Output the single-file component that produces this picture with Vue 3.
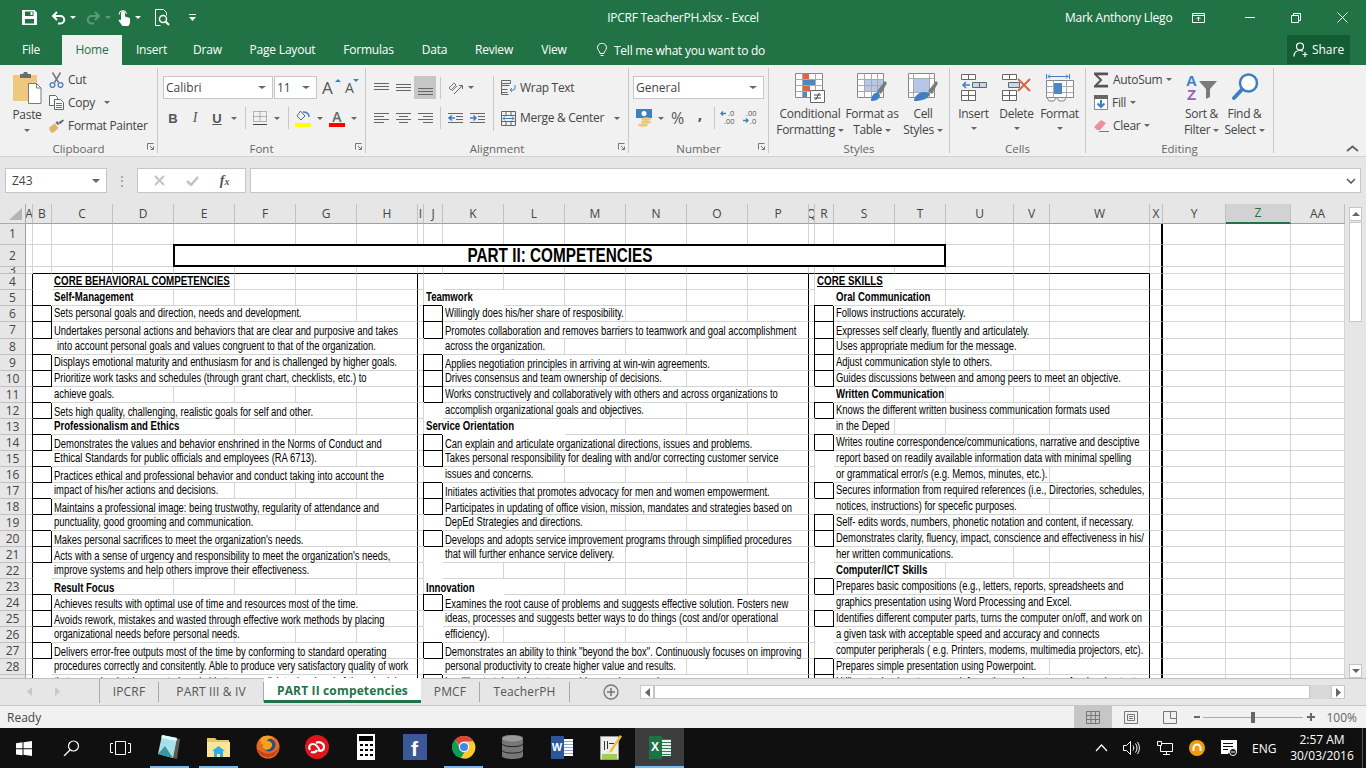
<template>
  <div class="app">
    <!-- title bar -->
    <div class="titlebar">
      <div class="qat">
        <svg class="q-save" width="15" height="15" viewBox="0 0 15 15"><path fill="#fff" fill-rule="evenodd" d="M0 0h12.5L15 2.5V15H0zM3 1.5V6h8.5V1.5zM3 9v4.5h9V9z"/><path fill="#fff" d="M8.5 2h2v3h-2z"/></svg>
        <svg class="q-undo" width="15" height="14" viewBox="0 0 15 14"><path fill="none" stroke="#fff" stroke-width="2" d="M6 1 2 5l4 4M2 5h7.5a3.7 3.7 0 0 1 0 7.5H7"/></svg>
        <i class="tri w q-car"></i>
        <svg class="q-redo" width="15" height="14" viewBox="0 0 15 14"><path fill="none" stroke="#5c9c7b" stroke-width="2" d="M9 1l4 4-4 4M13 5H5.500a3.700 3.700 0 0 0 0 7.500H8"/></svg>
        <i class="tri dim q-car"></i>
        <svg class="q-touch" width="13" height="16" viewBox="0 0 13 16"><path fill="#fff" d="M3 3a2 2 0 0 1 4 0v3.500l5 1.500v5l-1.500 3H4.500L.5 10.500l1-1L3 10z"/><path fill="none" stroke="#fff" d="M1.200 4.500a3.500 3.500 0 1 1 7.300-.5"/></svg>
        <i class="tri w q-car"></i>
        <svg class="q-prev" width="15" height="17" viewBox="0 0 15 17"><path fill="none" stroke="#fff" d="M5.500 16.500H.5V.5h8l3 3v3"/><circle cx="8" cy="10" r="3.500" fill="none" stroke="#fff" stroke-width="1.500"/><path stroke="#fff" stroke-width="2" d="M10.500 12.500l3.500 3.500"/></svg>
        <svg class="q-more" width="7" height="7" viewBox="0 0 7 7"><path fill="#fff" d="M0 0h7v1H0zM0 3h7L3.500 7z"/></svg>
      </div>
      <div class="doc-title">IPCRF TeacherPH.xlsx - Excel</div>
      <div class="win-area">
        <span class="user">Mark Anthony Llego</span>
        <svg class="w-disp" width="13" height="10" viewBox="0 0 13 10"><path fill="none" stroke="#fff" d="M.5.500h12v9H.5zM.5 2.500h12M6.500 8V4M4.500 6l2-2 2 2"/></svg>
        <svg class="w-min" width="10" height="1" viewBox="0 0 10 1"><path fill="#fff" d="M0 0h10v1H0z"/></svg>
        <svg class="w-max" width="10" height="10" viewBox="0 0 10 10"><path fill="none" stroke="#fff" d="M.5 2.500h7v7h-7zM2.500 2.500v-2h7v7h-2"/></svg>
        <svg class="w-close" width="11" height="11" viewBox="0 0 11 11"><path stroke="#fff" d="M.5.500l10 10M10.500.500l-10 10"/></svg>
      </div>
    </div>

    <!-- ribbon tabs -->
    <div class="tabs">
      <span class="tab rt-file">File</span>
      <span class="tab rt-home">Home</span>
      <span class="tab rt-insert">Insert</span>
      <span class="tab rt-draw">Draw</span>
      <span class="tab rt-layout">Page Layout</span>
      <span class="tab rt-form">Formulas</span>
      <span class="tab rt-data">Data</span>
      <span class="tab rt-review">Review</span>
      <span class="tab rt-view">View</span>
      <span class="tell">
        <svg width="10" height="14" viewBox="0 0 10 14"><path fill="none" stroke="#fff" d="M3 10.500C3 8 .5 7.500.5 4.700a4.500 4.500 0 0 1 9 0C9.500 7.500 7 8 7 10.500zM3.500 12.500h3"/></svg>
        Tell me what you want to do
      </span>
      <span class="share">
        <svg width="15" height="15" viewBox="0 0 15 15"><circle cx="7" cy="4.500" r="3.500" fill="none" stroke="#fff" stroke-width="1.200"/><path fill="none" stroke="#fff" stroke-width="1.200" d="M1 14.500c0-4 2.500-6 6-6 1.300 0 2.300.3 3 .8M12 10v5M9.500 12.500h5"/></svg>
        Share
      </span>
    </div>

    <!-- ribbon -->
    <div class="ribbon">
      <div class="group g-clip">
        <div class="g-body">
          <div class="paste">
            <svg width="29" height="33" viewBox="0 0 29 33"><path fill="#edc87e" d="M0 3h24v26H0z"/><path fill="#6b6b6b" d="M7 2h3l1-2h3l1 2h3v4H7z"/><path fill="#fff" stroke="#7b7b7b" d="M15.500 11.500h8l4.500 4.500v15.500H15.500z"/><path fill="none" stroke="#7b7b7b" d="M23.500 11.500V16H28"/></svg>
            <span class="lbl paste-l">Paste</span>
            <i class="tri"></i>
          </div>
          <div class="stack">
            <div class="row23">
              <svg class="sm" width="15" height="16" viewBox="0 0 15 16"><path stroke="#777" stroke-width="1.500" d="M3.500.5l6 10M11.500.5l-6 10"/><g fill="none" stroke="#3f7fc1" stroke-width="1.300"><circle cx="3.500" cy="13" r="2.400"/><circle cx="11.500" cy="13" r="2.400"/></g></svg>
              <span class="lbl">Cut</span>
            </div>
            <div class="row23">
              <svg class="sm" width="15" height="15" viewBox="0 0 15 15"><path fill="#fff" stroke="#666" d="M.5.500h6l2 2v8h-8z"/><path fill="#fff" stroke="#666" d="M5.500 4.500h6l3 3v7h-9z"/><path stroke="#3f7fc1" d="M7 8.500h6M7 10.500h6M7 12.500h6"/></svg>
              <span class="lbl">Copy</span>
              <i class="tri copy-car"></i>
            </div>
            <div class="row23">
              <svg class="sm" width="15" height="14" viewBox="0 0 16 14"><path fill="#e3b26a" d="M0 9l6-5 4 5-5 5H2z"/><path fill="#666" d="M7 3l2-1 2 3-2 1zM10 3l5-3 1 1-4 4z"/></svg>
              <span class="lbl">Format Painter</span>
            </div>
          </div>
        </div>
        <div class="g-label">Clipboard<svg class="launch" width="7" height="7" viewBox="0 0 7 7"><path fill="none" stroke="#777" d="M.5 6.500v-6h6M3 3l3.500 3.500M6.500 3.500v3h-3"/></svg></div>
      </div>

      <div class="group g-font">
        <div class="g-body col pad8">
          <div class="r1 ml5">
            <div class="input font-name"><span>Calibri</span><i class="tri"></i></div>
            <div class="input font-size"><span>11</span><i class="tri"></i></div>
            <span class="grow">A<i class="up"></i></span>
            <span class="shrink">A<i class="down"></i></span>
          </div>
          <div class="r2 ml4">
            <span class="s22 bi b">B</span>
            <span class="s22 bi i">I</span>
            <span class="s22 bi u">U</span>
            <i class="car"><i class="tri"></i></i>
            <i class="sep"></i>
            <span class="s22"><svg width="14" height="14" viewBox="0 0 14 14"><path fill="none" stroke="#777" stroke-dasharray="1 1" d="M.5.500h13v10H.5zM7 .5v10M.5 5.500h13"/><path stroke="#444" d="M0 13.500h14"/></svg></span>
            <i class="car"><i class="tri"></i></i>
            <i class="sep"></i>
            <span class="s22"><svg width="17" height="17" viewBox="0 0 17 17"><path fill="none" stroke="#666" d="M5.500 1l4.500 5-4 4-4-4z"/><path fill="none" stroke="#3f7fc1" stroke-width="1.500" d="M8 2c3 0 6 1.500 6 5"/><path fill="#ffff00" d="M0 13h16v4H0z"/></svg></span>
            <i class="car"><i class="tri"></i></i>
            <span class="s22"><svg width="16" height="17" viewBox="0 0 16 17"><text x="8" y="12" text-anchor="middle" font-family="Open Sans,sans-serif" font-size="14" font-weight="600" fill="#666">A</text><path fill="#ff0000" d="M0 13h16v4H0z"/></svg></span>
            <i class="car"><i class="tri"></i></i>
          </div>
        </div>
        <div class="g-label">Font<svg class="launch" width="7" height="7" viewBox="0 0 7 7"><path fill="none" stroke="#777" d="M.5 6.500v-6h6M3 3l3.500 3.500M6.500 3.500v3h-3"/></svg></div>
      </div>

      <div class="group g-align">
        <div class="g-body pad8 a-body">
          <div class="a-left">
            <div class="r1">
              <span class="s22"><svg width="15" height="10" viewBox="0 0 15 10"><path stroke="#666" d="M0 .5h15M0 3.500h15M0 6.500h15"/></svg></span>
              <span class="s22"><svg width="15" height="8" viewBox="0 0 15 8"><path stroke="#666" d="M0 .5h15M0 3.500h15M0 6.500h15"/></svg></span>
              <span class="s22 sel"><svg width="15" height="16" viewBox="0 0 15 16"><path stroke="#666" d="M0 8.500h15M0 11.500h15M0 14.500h15"/></svg></span>
              <i class="sep sep4"></i>
              <span class="s22"><svg width="15" height="14" viewBox="0 0 15 14"><path fill="none" stroke="#777" d="M1 7l5-5 2 2-5 5zM4 10l5-5"/><path fill="none" stroke="#666" d="M6 13l8-8M11 4.500h3.500V8"/></svg></span>
              <i class="car c10"><i class="tri"></i></i>
            </div>
            <div class="r2">
              <span class="s22"><svg width="15" height="11" viewBox="0 0 15 11"><path stroke="#666" d="M0 .5h15M0 3.500h10M0 6.500h15M0 9.500h10"/></svg></span>
              <span class="s22"><svg width="15" height="11" viewBox="0 0 15 11"><path stroke="#666" d="M0 .5h15M3 3.500h9M0 6.500h15M3 9.500h9"/></svg></span>
              <span class="s22"><svg width="15" height="11" viewBox="0 0 15 11"><path stroke="#666" d="M0 .5h15M5 3.500h10M0 6.500h15M5 9.500h10"/></svg></span>
              <i class="sep sep4"></i>
              <span class="s22"><svg width="15" height="11" viewBox="0 0 15 11"><path stroke="#666" d="M0 .5h15M8 3.500h7M8 6.500h7M0 9.500h15"/><path fill="none" stroke="#3f7fc1" stroke-width="1.500" d="M7 5H1M4 2.500L1 5l3 2.500"/></svg></span>
              <span class="s22"><svg width="15" height="11" viewBox="0 0 15 11"><path stroke="#666" d="M0 .5h15M8 3.500h7M8 6.500h7M0 9.500h15"/><path fill="none" stroke="#3f7fc1" stroke-width="1.500" d="M0 5h6M3.500 2.500L6 5 3.500 7.500"/></svg></span>
            </div>
          </div>
          <i class="vsep"></i>
          <div class="a-right">
            <div class="r1">
              <svg class="sm" width="15" height="15" viewBox="0 0 15 15"><path fill="none" stroke="#666" d="M.5.500h9v3h-9zM.5 5.500h8M.5 9.500h6M.5 12.500h6M.5 3.500v11h7"/><path fill="none" stroke="#3f7fc1" d="M14 5v3a2 2 0 0 1-2 2H9M11 8l-2 2 2 2"/></svg>
              <span class="lbl">Wrap Text</span>
            </div>
            <div class="r2">
              <svg class="sm" width="15" height="15" viewBox="0 0 15 15"><path fill="none" stroke="#666" d="M.5.500h14v14H.5zM.5 4.500h14M.5 10.500h14M5 .5v4M10 .5v4M5 10.500v4M10 10.500v4"/><path fill="none" stroke="#3f7fc1" d="M2 7.500h11M4 5.500l-2 2 2 2M11 5.500l2 2-2 2"/></svg>
              <span class="lbl flex1">Merge &amp; Center</span>
              <i class="tri"></i>
            </div>
          </div>
        </div>
        <div class="g-label">Alignment<svg class="launch" width="7" height="7" viewBox="0 0 7 7"><path fill="none" stroke="#777" d="M.5 6.500v-6h6M3 3l3.500 3.500M6.500 3.500v3h-3"/></svg></div>
      </div>

      <div class="group g-num">
        <div class="g-body col pad8">
          <div class="r1 ml5"><div class="input num-fmt"><span>General</span><i class="tri"></i></div></div>
          <div class="r2 ml4">
            <span class="s24"><svg width="17" height="18" viewBox="0 0 17 18"><path fill="#3f7fc1" d="M0 0h16v9H0z"/><circle cx="8" cy="4.500" r="2.500" fill="#fff"/><g fill="#edc87e"><ellipse cx="10" cy="10" rx="5" ry="1.700"/><ellipse cx="10" cy="13" rx="5" ry="1.700"/><ellipse cx="7" cy="16" rx="5" ry="1.700"/></g></svg></span>
            <i class="car c10"><i class="tri"></i></i>
            <span class="pct">%</span>
            <span class="comma">,</span>
            <i class="sep sep3"></i>
            <span class="s22"><svg class="dec" width="16" height="16" viewBox="0 0 16 16"><path fill="none" stroke="#3f7fc1" stroke-width="1.300" d="M5 3.500H0M2 1.500l-2 2 2 2"/><text x="7" y="6" font-family="Open Sans,sans-serif" font-size="7.500" fill="#555">.0</text><text x="3" y="14" font-family="Open Sans,sans-serif" font-size="7.500" fill="#555">.00</text></svg></span>
            <span class="s22"><svg class="dec" width="16" height="16" viewBox="0 0 16 16"><text x="3" y="6" font-family="Open Sans,sans-serif" font-size="7.500" fill="#555">.00</text><path fill="none" stroke="#3f7fc1" stroke-width="1.300" d="M0 10.500h5M3 8.500l2 2-2 2"/><text x="7" y="14" font-family="Open Sans,sans-serif" font-size="7.500" fill="#555">.0</text></svg></span>
          </div>
        </div>
        <div class="g-label">Number<svg class="launch" width="7" height="7" viewBox="0 0 7 7"><path fill="none" stroke="#777" d="M.5 6.500v-6h6M3 3l3.500 3.500M6.500 3.500v3h-3"/></svg></div>
      </div>

      <div class="group g-styles">
        <div class="g-body big-row">
          <div class="big w74">
            <div class="big-ic"><svg width="30" height="30" viewBox="0 0 30 30"><path fill="#fff" stroke="#888" d="M.5.500h27v24H.5z"/><path stroke="#aaa" d="M7.500.5v24M20.500.5v24M.5 6.500h27M.5 12.500h27M.5 18.500h27"/><path fill="#dd6541" d="M8 1h6v5H8zM8 13h7v5H8z"/><path fill="#4f86c6" d="M8 7h12v5H8zM8 19h4v5H8z"/><path fill="#fff" stroke="#666" d="M15.500 17.500h14v12h-14z"/><path stroke="#444" d="M19 22h7M19 25h7M24.500 20l-4 7"/></svg></div>
            <span class="lbl">Conditional</span>
            <span class="lbl">Formatting <i class="tri"></i></span>
          </div>
          <div class="big w50">
            <div class="big-ic"><svg width="30" height="30" viewBox="0 0 30 30"><path fill="#fff" stroke="#888" d="M.5.500h26v24H.5z"/><path fill="#b4c7e7" d="M7 7h19v12H7z"/><path stroke="#aaa" d="M7.500.5v24M14.500.5v24M20.500.5v24M.5 6.500h26M.5 12.500h26M.5 18.500h26"/><path fill="#7b7b7b" d="M20 18l8-10 2 2-6 11z"/><path fill="#3f7fc1" d="M14 28c0-5 3-9 8-9l1 4c-1 4-5 5-9 5z"/></svg></div>
            <span class="lbl">Format as</span>
            <span class="lbl">Table <i class="tri"></i></span>
          </div>
          <div class="big w52">
            <div class="big-ic"><svg width="30" height="30" viewBox="0 0 30 30"><path fill="#fff" stroke="#888" d="M.5.500h26v24H.5z"/><path fill="#b4c7e7" d="M5 5h17v14H5z"/><path stroke="#aaa" d="M.5 5.500h26M.5 19.500h26M5.500.5v24M21.500.5v24"/><path fill="#7b7b7b" d="M20 18l8-10 2 2-6 11z"/><path fill="#3f7fc1" d="M6 28c0-5 5-9 10-9l6 1c-1 6-8 8-16 8z"/></svg></div>
            <span class="lbl">Cell</span>
            <span class="lbl">Styles <i class="tri"></i></span>
          </div>
        </div>
        <div class="g-label">Styles</div>
      </div>

      <div class="group g-cells">
        <div class="g-body big-row pad2">
          <div class="big w43">
            <div class="big-ic"><svg width="26" height="28" viewBox="0 0 26 28"><path fill="#fff" stroke="#666" d="M.5 1.500h14v5h-14zM7.500 1.500v5M.5 17.500h14v10h-14zM.5 22.500h14M7.500 17.500v10"/><path fill="#c5d7ea" stroke="#666" d="M11.500 9.500h14v5h-14zM18.500 9.500v5"/><path fill="none" stroke="#3f7fc1" stroke-width="1.500" d="M9 12H2M5 9l-3 3 3 3"/></svg></div>
            <span class="lbl">Insert</span><i class="tri two"></i>
          </div>
          <div class="big w43">
            <div class="big-ic"><svg width="30" height="28" viewBox="0 0 30 28"><path fill="#fff" stroke="#666" d="M.5 1.500h14v5h-14zM7.500 1.500v5M.5 17.500h14v10h-14zM.5 22.500h14M7.500 17.500v10"/><path fill="#c5d7ea" stroke="#666" d="M6.500 9.500h11v5h-11z"/><path stroke="#dd6541" stroke-width="2" d="M16 6l12 12M28 6L16 18"/></svg></div>
            <span class="lbl">Delete</span><i class="tri two"></i>
          </div>
          <div class="big w43">
            <div class="big-ic"><svg width="28" height="30" viewBox="0 0 28 30"><path fill="none" stroke="#3f7fc1" d="M.5 1v5M23.500 1v5M2 3.500h20M4 1.500l-2 2 2 2M20 1.500l2 2-2 2"/><path fill="#fff" stroke="#888" d="M.5 7.500h27v17H.5z"/><path stroke="#aaa" d="M7.500 7.500v17M20.500 7.500v17M.5 13.500h27M.5 19.500h27"/><path fill="#4f86c6" d="M8 10h8v11H8z"/><path fill="none" stroke="#888" d="M1 25l2 3h5l2-3M11 25l2 3h5l2-3"/></svg></div>
            <span class="lbl">Format</span><i class="tri two"></i>
          </div>
        </div>
        <div class="g-label">Cells</div>
      </div>

      <div class="group g-edit">
        <div class="g-body e-body">
          <div class="stack e-stack">
            <div class="row23">
              <svg class="sm" width="15" height="16" viewBox="0 0 16 16"><path fill="#555" d="M0 0h15v3H4l5 5-5 5h11v3H0v-2l6-6-6-6z"/></svg>
              <span class="lbl flex1">AutoSum</span>
              <i class="tri auto-car"></i>
            </div>
            <div class="row23">
              <svg class="sm" width="14" height="15" viewBox="0 0 14 15"><path fill="#fff" stroke="#888" d="M.5.500h13v14H.5z"/><path fill="#666" d="M0 0h14v4H0z"/><path fill="none" stroke="#3f7fc1" stroke-width="2" d="M7 5v7M3.500 8.500L7 12l3.500-3.500"/></svg>
              <span class="lbl">Fill</span><i class="tri after"></i>
            </div>
            <div class="row23">
              <svg class="sm" width="15" height="13" viewBox="0 0 15 13"><path fill="#ef8f98" d="M0 8l7-7 5 3-6 7H3z"/><path stroke="#777" d="M5 12.500h10"/></svg>
              <span class="lbl">Clear</span><i class="tri after"></i>
            </div>
          </div>
          <div class="big w43">
            <div class="big-ic"><svg width="31" height="28" viewBox="0 0 31 28"><text x="0" y="13" font-family="Liberation Sans,sans-serif" font-weight="700" font-size="15" fill="#3f7fc1">A</text><text x="1" y="27" font-family="Liberation Sans,sans-serif" font-weight="700" font-size="15" fill="#9a5db5">Z</text><path fill="#7b7b7b" d="M13 8h18l-7 8v8l-4 2V16z"/></svg></div>
            <span class="lbl">Sort &amp;</span>
            <span class="lbl">Filter <i class="tri"></i></span>
          </div>
          <div class="big w43">
            <div class="big-ic"><svg width="28" height="28" viewBox="0 0 28 28"><circle cx="17.500" cy="10" r="8.500" fill="#fff" stroke="#3f7fc1" stroke-width="2.500"/><path stroke="#3f7fc1" stroke-width="4" stroke-linecap="round" d="M11 16.500L3 25"/></svg></div>
            <span class="lbl">Find &amp;</span>
            <span class="lbl">Select <i class="tri"></i></span>
          </div>
        </div>
        <div class="g-label">Editing</div>
      </div>

      <svg class="collapse" width="13" height="7" viewBox="0 0 13 7"><path fill="none" stroke="#666" stroke-width="2" d="M1 6l5.500-4.500L12 6"/></svg>
    </div>

    <!-- formula bar -->
    <div class="fbar">
      <div class="namebox"><span>Z43</span><i class="tri big-tri"></i></div>
      <span class="fdots">⋮</span>
      <div class="fbtns">
        <svg width="11" height="11" viewBox="0 0 11 11"><path stroke="#c4c4c4" stroke-width="2" d="M1 1l9 9M10 1l-9 9"/></svg>
        <svg width="13" height="10" viewBox="0 0 13 10"><path fill="none" stroke="#c4c4c4" stroke-width="2.500" d="M1 5l4 4 7-8"/></svg>
        <span class="fx">f<small>x</small></span>
      </div>
      <div class="finput">
        <svg width="10" height="6" viewBox="0 0 10 6"><path fill="none" stroke="#555" stroke-width="1.500" d="M1 1l4 4 4-4"/></svg>
      </div>
    </div>

    <!-- sheet -->
    <div class="sheet">
      <div class="grid" :style="gridStyle">
        <div class="corner">
          <svg width="13" height="12" viewBox="0 0 13 12"><path fill="#b4b4b4" d="M13 0v12H0z"/></svg>
        </div>
        <div v-for="c in colNames" :key="c" class="colhead" :class="{ active: c === 'Z' }">{{ c }}</div>
        <template v-for="cell in cells" :key="cell.key">
          <div v-if="cell.head" class="rowhead">{{ cell.text }}</div>
          <div v-else class="cell" :class="cell.cls" :style="cell.span > 1 ? { gridColumn: 'span ' + cell.span } : null"><span v-if="cell.text" class="tx">{{ cell.text }}</span></div>
        </template>
      </div>
      <div class="vscroll">
        <div class="sb-btn"><i class="tri up-tri"></i></div>
        <div class="sb-thumb"></div>
        <div class="sb-fill"></div>
        <div class="sb-btn"><i class="tri"></i></div>
      </div>
    </div>

    <!-- sheet tabs -->
    <div class="sheetbar">
      <div class="nav">
        <svg width="5" height="9" viewBox="0 0 5 9"><path fill="#c8c8c8" d="M5 0v9L0 4.500z"/></svg>
        <svg width="5" height="9" viewBox="0 0 5 9"><path fill="#c8c8c8" d="M0 0v9l5-4.500z"/></svg>
      </div>
      <span class="stab w59">IPCRF</span>
      <span class="stab w105">PART III &amp; IV</span>
      <span class="stab on">PART II competencies</span>
      <span class="stab w59">PMCF</span>
      <span class="stab w90">TeacherPH</span>
      <span class="plus">
        <svg width="16" height="16" viewBox="0 0 16 16"><circle cx="8" cy="8" r="7" fill="none" stroke="#777" stroke-width="1.300"/><path stroke="#777" stroke-width="1.600" d="M8 4v8M4 8h8"/></svg>
      </span>
      <div class="hscroll">
        <div class="hbtn"><svg width="5" height="9" viewBox="0 0 5 9"><path fill="#666" d="M5 0v9L0 4.500z"/></svg></div>
        <div class="hthumb"></div>
        <div class="hfill"></div>
        <div class="hbtn"><svg width="5" height="9" viewBox="0 0 5 9"><path fill="#666" d="M0 0v9l5-4.500z"/></svg></div>
      </div>
    </div>

    <!-- status bar -->
    <div class="status">
      <span class="ready">Ready</span>
      <div class="views">
        <span class="view sel2"><svg width="14" height="13" viewBox="0 0 14 13"><path fill="none" stroke="#777" d="M.5.500h13v12H.5zM5 .5v12M9.500.5v12M.5 4.500h13M.5 8.500h13"/></svg></span>
        <span class="view"><svg width="14" height="13" viewBox="0 0 14 13"><path fill="none" stroke="#777" d="M.5.500h13v12H.5z"/><path fill="none" stroke="#777" d="M3.500 3.500h7v6h-7zM5 5.500h4M5 7.500h4"/></svg></span>
        <span class="view"><svg width="14" height="13" viewBox="0 0 14 13"><path fill="none" stroke="#777" d="M.5.500h13v12H.5zM7.500.5v7h6"/></svg></span>
      </div>
      <div class="zoom-s">
        <i class="zm"></i>
        <div class="slider"><i class="knob"></i></div>
        <i class="zp"></i>
      </div>
      <span class="pct100">100%</span>
    </div>

    <!-- taskbar -->
    <div class="taskbar">
      <div class="sys">
        <svg class="tb-win" width="16" height="15" viewBox="0 0 16 15"><path fill="#fff" d="M0 2.200l6.500-.9v6H0zM7.500 1.200L16 0v7.300H7.500zM0 8.300h6.500v6L0 13.400zM7.500 8.300H16V15l-8.500-1.200z"/></svg>
        <svg class="tb-search" width="17" height="16" viewBox="0 0 17 16"><circle cx="10.500" cy="6" r="5" fill="none" stroke="#fff" stroke-width="1.200"/><path stroke="#fff" stroke-width="1.300" d="M7 10L1 16"/></svg>
        <svg class="tb-view" width="21" height="14" viewBox="0 0 21 14"><path fill="none" stroke="#fff" d="M5.500.5h10v13h-10zM3 2.500H.5v9H3M18 2.500h2.500v9H18"/></svg>
      </div>
      <div class="slots">
        <span class="slot run"><svg width="24" height="26" viewBox="0 0 24 26"><path fill="#5a5a4f" d="M5 2l17 3-3 20-4-1z"/><path fill="#a8dfe8" d="M4 1l15 3-4 20L0 20z"/><path fill="#3f94a4" d="M0 20l7-8 8 12z"/><path fill="#dff" d="M4 1l15 3-.8 3L3.300 4z"/></svg></span>
        <span class="slot run"><svg width="23" height="20" viewBox="0 0 23 20"><path fill="#e6c566" d="M0 1h8l2 2h12v17H0z"/><path fill="#fbe59a" d="M0 5h23v15H0z"/><path fill="#2eaee6" d="M11.500 9L18 14h-2v6h-3v-3h-3v3H7v-6H5z"/></svg></span>
        <span class="slot"><svg width="24" height="24" viewBox="0 0 24 24"><circle cx="12" cy="12" r="11.500" fill="#e66a1f"/><circle cx="13" cy="10" r="6.500" fill="#2d4d8e"/><path fill="#f7a11a" d="M5 3c3-3 10-3 13 1-4-2-6 0-7 2 3 0 6 2 5 5-1 4-7 5-9 2-1-1 0-3 0-3-3-2-3-5-2-7z"/><path fill="#c9421c" d="M1 14c2 7 10 10 16 7 3-2 5-5 6-9-3 5-9 8-14 6-4-1-6-3-8-4z"/></svg></span>
        <span class="slot"><svg width="24" height="24" viewBox="0 0 24 24"><circle cx="12" cy="12" r="12" fill="#e0161e"/><path fill="none" stroke="#fff" stroke-width="2.200" d="M5 15c-2-3 0-6 3-6 3 0 5 3 6.500 6M11 8c3-2 8 0 8 4 0 3-3 5-6 3M6 17c3 1 5 0 6-2"/></svg></span>
        <span class="slot"><svg width="18" height="26" viewBox="0 0 18 26"><path fill="#fff" d="M0 0h18v26H0z"/><path fill="#000" d="M2 2h14v5H2zM3 10h3v2H3zM8 10h3v2H8zM13 10h3v2h-3zM3 15h3v2H3zM8 15h3v2H8zM13 15h3v2h-3zM3 20h3v2H3zM8 20h3v2H8zM13 20h3v2h-3z"/></svg></span>
        <span class="slot"><span class="fb">f</span></span>
        <span class="slot run"><svg width="24" height="24" viewBox="0 0 24 24"><circle cx="12" cy="12" r="11" fill="#ddb"/><path fill="#db4437" d="M12 1a11 11 0 0 1 9.500 5.500H12a5.500 5.500 0 0 0-5.200 3.800L3 4.500A11 11 0 0 1 12 1z"/><path fill="#0f9d58" d="M3 4.500l4 7a5.500 5.500 0 0 0 6 5.900L9 23A11 11 0 0 1 3 4.500z"/><path fill="#fdc92f" d="M21.500 6.500A11 11 0 0 1 9 23l4.500-7.500A5.500 5.500 0 0 0 16 7z"/><circle cx="12" cy="12" r="5" fill="#fff"/><circle cx="12" cy="12" r="4" fill="#4285f4"/></svg></span>
        <span class="slot"><svg width="21" height="24" viewBox="0 0 21 24"><path fill="#777" d="M0 3c0-4 21-4 21 0v18c0 4-21 4-21 0z"/><ellipse cx="10.500" cy="3.500" rx="10" ry="3" fill="#9b9b9b"/><path fill="none" stroke="#222" d="M0 9c2 3.500 19 3.500 21 0M0 15.500c2 3.500 19 3.500 21 0"/></svg></span>
        <span class="slot"><span class="word"><b>W</b><i class="lines"></i></span></span>
        <span class="slot"><svg width="22" height="26" viewBox="0 0 22 26"><path fill="#eee" stroke="#999" d="M.5 2.500h18v23H.5z"/><path fill="#9fcf52" d="M2 20h15v5H2z"/><path fill="#333" d="M4 7h1v9H4zM7 7h1v8H7zM9 9h5v1H9z"/><path fill="#e9c03a" d="M10 16L20 1l2 1.500-10 15-3 1.500z"/></svg></span>
        <span class="slot run act"><span class="xl"><b>X</b><i class="lines g"></i></span></span>
      </div>
      <div class="tray">
        <svg class="tr-chev" width="13" height="8" viewBox="0 0 13 8"><path fill="none" stroke="#fff" stroke-width="1.200" d="M1 7l5.500-6L12 7"/></svg>
        <svg class="tr-vol" width="17" height="14" viewBox="0 0 17 14"><path fill="none" stroke="#fff" d="M.5 4.500h3l4-4v13l-4-4h-3zM10 4.500c1 1.500 1 3.500 0 5M12.500 2.500c2 3 2 6 0 9M14.500 1c2.500 4 2.500 8 0 12"/></svg>
        <svg class="tr-net" width="16" height="14" viewBox="0 0 16 14"><path fill="none" stroke="#fff" d="M3.500 2.500H15.500v8H3.500zM9.500 10.500v3M6 13.500h7"/><path fill="#111" stroke="#fff" d="M.5.500h4v4h-4z"/></svg>
        <svg class="tr-app" width="16" height="16" viewBox="0 0 16 16"><circle cx="8" cy="8" r="8" fill="#f29a12"/><path fill="none" stroke="#fff" stroke-width="2" d="M4.500 11V8a3.500 3.500 0 0 1 7 0v3"/></svg>
        <svg class="tr-note" width="17" height="16" viewBox="0 0 17 16"><path fill="#fff" d="M0 0h16v12H9a4 4 0 0 0-2 2H0z"/><path stroke="#111" d="M2 3.500h10M2 6.500h10M2 9.500h5"/><circle cx="12" cy="12" r="3.500" fill="#111" stroke="#fff"/><path stroke="#fff" d="M10 12h4"/></svg>
        <span class="eng">ENG</span>
        <span class="clock"><span>2:57 AM</span><span>30/03/2016</span></span>
        <i class="desk"></i>
      </div>
    </div>
  </div>
</template>

<script setup>
const colNames = ['A','B','C','D','E','F','G','H','I','J','K','L','M','N','O','P','Q','R','S','T','U','V','W','X','Y','Z','AA']
const colWidths = [7,19,61,61,61,61,61,61,6,19,61,61,61,61,61,61,6,19,61,51,68,36,100,13,63,65,54]
const rowHeights = [21,22,7,16,16,16,17,16,16,16,16,16,16,16,16,16,16,16,16,16,16,16,16,16,16,16,16,16,16]

const gridStyle = {
  gridTemplateColumns: '26px ' + colWidths.map(w => w + 'px').join(' '),
  gridTemplateRows: '20px ' + rowHeights.map(h => h + 'px').join(' '),
}

// row, first col, last col, text, flags (b bold, u underline, l sits lower, n nudged, t title)
const lines = [
  [2,'E','T','PART II: COMPETENCIES','t'],

  [4,'C','E','CORE BEHAVIORAL COMPETENCIES','bu'],
  [5,'C','D','Self-Management','b'],
  [6,'C','G','Sets personal goals and direction, needs and development.',''],
  [7,'C','H','Undertakes personal actions and behaviors that are clear and purposive and takes','l'],
  [8,'C','H','into account personal goals and values congruent to that of the organization.','n'],
  [9,'C','H','Displays emotional maturity and enthusiasm for and is challenged by higher goals.',''],
  [10,'C','H','Prioritize work tasks and schedules (through grant chart, checklists, etc.) to',''],
  [11,'C','D','achieve goals.',''],
  [12,'C','G','Sets high quality, challenging, realistic goals for self and other.','l'],
  [13,'C','E','Professionalism and Ethics','b'],
  [14,'C','H','Demonstrates the values and behavior enshrined in the Norms of Conduct and','l'],
  [15,'C','G','Ethical Standards for public officials and employees (RA 6713).',''],
  [16,'C','H','Practices ethical and professional behavior and conduct taking into account the','l'],
  [17,'C','E','impact of his/her actions and decisions.',''],
  [18,'C','H','Maintains a professional image: being trustwothy, regularity of attendance and','l'],
  [19,'C','F','punctuality, good grooming and communication.',''],
  [20,'C','G',"Makes personal sacrifices to meet the organization's needs.",'l'],
  [21,'C','H',"Acts with a sense of urgency and responsibility to meet the organization's needs,",'l'],
  [22,'C','G','improve systems and help others improve their effectiveness.',''],
  [23,'C','D','Result Focus','bl'],
  [24,'C','H','Achieves results with optimal use of time and resources most of the time.','l'],
  [25,'C','H','Avoids rework, mistakes and wasted through effective work methods by placing','l'],
  [26,'C','E','organizational needs before personal needs.',''],
  [27,'C','H','Delivers error-free outputs most of the time by conforming to standard operating','l'],
  [28,'C','H','procedures correctly and consitently. Able to produce very satisfactory quality of work',''],
  [29,'C','H','that exceeds what is expected, and able to accomplish tasks ahead of the schedule.',''],

  [5,'J','K','Teamwork','b'],
  [6,'K','M','Willingly does his/her share of resposibility.',''],
  [7,'K','P','Promotes collaboration and removes barriers to teamwork and goal accomplishment','l'],
  [8,'K','L','across the organization.',''],
  [9,'K','O','Applies negotiation principles in arriving at win-win agreements.','l'],
  [10,'K','N','Drives consensus and team ownership of decisions.',''],
  [11,'K','P','Works constructively and collaboratively with others and across organizations to',''],
  [12,'K','N','accomplish organizational goals and objectives.',''],
  [13,'J','L','Service Orientation','b'],
  [14,'K','P','Can explain and articulate organizational directions, issues and problems.','l'],
  [15,'K','P','Takes personal responsibility for dealing with and/or correcting customer service',''],
  [16,'K','L','issues and concerns.',''],
  [17,'K','P','Initiates activities that promotes advocacy for men and women empowerment.','l'],
  [18,'K','P','Participates in updating of office vision, mission, mandates and strategies based on','l'],
  [19,'K','M','DepEd Strategies and directions.',''],
  [20,'K','P','Develops and adopts service improvement programs through simplified procedures','l'],
  [21,'K','M','that will further enhance service delivery.',''],
  [23,'J','K','Innovation','bl'],
  [24,'K','P','Examines the root cause of problems and suggests effective solution. Fosters new','l'],
  [25,'K','P','ideas, processes and suggests better ways to do things (cost and/or operational',''],
  [26,'K','K','efficiency).',''],
  [27,'K','P','Demonstrates an ability to think "beyond the box". Continuously focuses on improving','l'],
  [28,'K','N','personal productivity to create higher value and results.',''],
  [29,'K','P','Is willing to take risks to try new ideas and approaches.',''],

  [4,'R','S','CORE SKILLS','bu'],
  [5,'S','T','Oral Communication','b'],
  [6,'S','U','Follows instructions accurately.',''],
  [7,'S','V','Expresses self clearly, fluently and articulately.','l'],
  [8,'S','V','Uses appropriate medium for the message.',''],
  [9,'S','U','Adjust communication style to others.',''],
  [10,'S','W','Guides discussions between and among peers to meet an objective.',''],
  [11,'S','T','Written Communication','b'],
  [12,'S','W','Knows the different written business communication formats used',''],
  [13,'S','S','in the Deped',''],
  [14,'S','W','Writes routine correspondence/communications, narrative and desciptive',''],
  [15,'S','W','report based on readily available information data with minimal spelling',''],
  [16,'S','V','or grammatical error/s (e.g. Memos, minutes, etc.).',''],
  [17,'S','W','Secures information from required references (i.e., Directories, schedules,',''],
  [18,'S','U','notices, instructions) for specefic purposes.',''],
  [19,'S','W','Self- edits words, numbers, phonetic notation and content, if necessary.',''],
  [20,'S','W','Demonstrates clarity, fluency, impact, conscience and effectiveness in his/',''],
  [21,'S','U','her written communications.',''],
  [22,'S','T','Computer/ICT Skills','b'],
  [23,'S','W','Prepares basic compositions (e.g., letters, reports, spreadsheets and',''],
  [24,'S','W','graphics presentation using Word Processing and Excel.',''],
  [25,'S','W','Identifies different computer parts, turns the computer on/off, and work on',''],
  [26,'S','W','a given task with acceptable speed and accuracy and connects',''],
  [27,'S','W','computer peripherals ( e.g. Printers, modems, multimedia projectors, etc).',''],
  [28,'S','V','Prepares simple presentation using Powerpoint.',''],
  [29,'S','W','Utilizes technology to access information and create professional output.',''],
]

const boxes = {
  B: [6,7,9,10,12,14,16,18,20,21,24,25,27],
  J: [6,7,9,10,11,14,15,17,18,20,24,27,29],
  R: [6,7,8,9,10,12,14,17,19,20,23,25,28,29],
}
const blackRight = ['A','H','P','W']

const cells = []
rowHeights.forEach((_, i) => {
  const r = i + 1
  cells.push({ key: 'r' + r, head: true, text: r })
  for (let c = 0; c < colNames.length; ) {
    const name = colNames[c]
    const line = lines.find(l => l[0] === r && l[1] === name)
    const last = line ? colNames.indexOf(line[2]) : c
    const cls = []
    if (line) {
      cls.push('txt')
      for (const f of line[4]) cls.push('f-' + f)
    }
    if (r >= 4 && blackRight.includes(colNames[last])) cls.push('vblack')
    if (r === 3 && c >= 1 && c <= 22) cls.push('hblack')
    if (colNames[last] === 'X') cls.push('thick')
    if (boxes[name] && r >= 4) {
      cls.push(boxes[name].includes(r) ? 'box' : 'plain')
    }
    cells.push({ key: r + name, text: line ? line[3] : '', span: last - c + 1, cls })
    c = last + 1
  }
})
</script>

<style>
html, body { margin: 0; background: #fff; overflow: hidden; }
</style>

<style scoped>
.app {
  width: 1366px;
  height: 768px;
  display: flex;
  flex-direction: column;
  overflow: hidden;
  font-family: "Open Sans", "Liberation Sans", sans-serif;
  font-size: 12px;
  color: #444;
}

i { font-style: normal; }

.tri {
  display: inline-block;
  width: 0;
  height: 0;
  border: 3px solid transparent;
  border-top: 3px solid #666;
  border-bottom: 0;
  vertical-align: middle;
}
.tri.w { border-top-color: #fff; }
.tri.dim { border-top-color: #5c9c7b; }

/* title bar */
.titlebar {
  height: 35px;
  background: #217346;
  color: #fff;
  display: flex;
  align-items: center;
  position: relative;
}
.qat { display: flex; align-items: center; padding-left: 22px; }
.q-undo { margin-left: 14px; }
.q-car { margin-left: 4px; }
.q-redo { margin-left: 10px; }
.q-touch { margin-left: 7px; }
.q-prev { margin-left: 14px; }
.q-more { margin-left: 19px; }
.doc-title {
  position: absolute;
  left: 0;
  right: 0;
  text-align: center;
  font-size: 12px;
  letter-spacing: -0.25px;
}
.win-area { margin-left: auto; display: flex; align-items: center; position: relative; }
.user { font-size: 12px; letter-spacing: -0.25px; width: 127px; }
.w-disp { margin-right: 40px; }
.w-min { margin-right: 36px; }
.w-max { margin-right: 36px; }
.w-close { margin-right: 18px; }

/* ribbon tabs */
.tabs {
  height: 30px;
  background: #217346;
  color: #fff;
  display: flex;
  align-items: center;
  position: relative;
}
.tab {
  height: 30px;
  line-height: 30px;
  text-align: center;
  font-size: 12px;
  letter-spacing: -0.2px;
}
.rt-file { width: 62px; }
.rt-home { width: 60px; background: #f1f1f1; color: #217346; }
.rt-insert { width: 59px; }
.rt-draw { width: 53px; }
.rt-layout { width: 97px; }
.rt-form { width: 75px; }
.rt-data { width: 57px; }
.rt-review { width: 62px; }
.rt-view { width: 58px; }
.tell { display: flex; align-items: center; gap: 7px; margin-left: 14px; font-size: 12px; letter-spacing: -0.25px; }
.share {
  margin-left: auto;
  margin-right: 16px;
  margin-top: -1px;
  width: 63px;
  height: 29px;
  background: #145c34;
  display: flex;
  align-items: center;
  justify-content: center;
  gap: 4px;
  font-size: 12px;
}

/* ribbon */
.ribbon {
  height: 92px;
  box-sizing: border-box;
  background: #f1f1f1;
  border-bottom: 1px solid #d2d2d2;
  display: flex;
  position: relative;
}
.group {
  box-sizing: border-box;
  height: 85px;
  margin-top: 3px;
  border-right: 1px solid #c8c8c8;
  position: relative;
  flex: none;
}
.g-clip { width: 158px; }
.g-font { width: 208px; }
.g-align { width: 263px; }
.g-num { width: 140px; }
.g-styles { width: 181px; }
.g-cells { width: 136px; }
.g-edit { width: 188px; }
.g-body { height: 74px; display: flex; box-sizing: border-box; }
.g-body.col { flex-direction: column; }
.pad8 { padding-top: 8px; }
.pad2 { padding-left: 2px; }
.ml5 { margin-left: 5px; }
.ml4 { margin-left: 4px; }
.g-num .ml5 { margin-left: 4px; }
.g-num .ml4 { margin-left: 3px; }
.g-label {
  height: 14px;
  line-height: 14px;
  text-align: center;
  font-size: 11.5px;
  color: #666;
}
.launch { position: absolute; right: 3px; bottom: 3px; }
.lbl { font-size: 12px; line-height: 16px; letter-spacing: -0.3px; white-space: nowrap; color: #444; }
.flex1 { flex: 1; }
.sm { flex: none; margin-right: 4px; }

.paste {
  width: 50px;
  padding-top: 4px;
  box-sizing: border-box;
  display: flex;
  flex-direction: column;
  align-items: center;
  margin-left: 2px;
}
.paste-l { margin-top: 2px; line-height: 16px; }
.paste .tri { margin-top: 6px; }
.stack { display: flex; flex-direction: column; margin-left: -3px; }
.row23 { height: 23px; display: flex; align-items: center; }
.copy-car { margin-left: 9px; }

.r1 { height: 23px; display: flex; align-items: center; }
.r2 { height: 26px; margin-top: 6px; display: flex; align-items: center; }
.input {
  box-sizing: border-box;
  height: 23px;
  background: #fff;
  border: 1px solid #c6c6c6;
  display: flex;
  align-items: center;
  justify-content: space-between;
  padding: 0 6px 0 2px;
  font-size: 12px;
}
.input .tri { border-width: 3px 4px 0; }
.font-name { width: 110px; }
.font-size { width: 43px; margin-left: 1px; }
.num-fmt { width: 131px; }
.grow, .shrink { color: #555; position: relative; line-height: 20px; }
.grow { margin-left: 5px; width: 19px; font-size: 17px; }
.shrink { margin-left: 4px; width: 14px; font-size: 14px; }
.up, .down { position: absolute; right: 0; top: 1px; width: 0; height: 0; border-left: 3px solid transparent; border-right: 3px solid transparent; }
.up { border-bottom: 3px solid #3f7fc1; }
.down { border-top: 3px solid #3f7fc1; }
.s22, .s24 { height: 23px; display: flex; align-items: center; justify-content: center; flex: none; }
.s22 { width: 22px; }
.s24 { width: 24px; }
.sel { background: #c6c6c6; }
.bi { font-family: "Liberation Serif", serif; font-size: 14px; color: #555; }
.b { font-family: "Liberation Sans", sans-serif; font-weight: 700; font-size: 13px; }
.i { font-style: italic; font-size: 14px; }
.u { font-family: "Liberation Sans", sans-serif; font-weight: 700; font-size: 13px; text-decoration: underline; }
.car { width: 12px; display: flex; justify-content: center; flex: none; }
.c10 { width: 10px; }
.sep { width: 1px; height: 22px; background: #c8c8c8; margin: 0 3px 0 5px; flex: none; }
.sep4 { margin: 0 3px 0 4px; }
.sep3 { margin: 0 3px 0 3px; }
.pct { width: 23px; text-align: center; font-size: 16px; color: #555; }
.comma { width: 22px; text-align: center; font-size: 16px; font-weight: 700; line-height: 14px; color: #555; margin-top: -8px; }
.dec { overflow: visible; }

.a-body { display: flex; }
.a-left { width: 127px; padding-left: 4px; box-sizing: border-box; }
.vsep { width: 1px; height: 55px; background: #c8c8c8; flex: none; }
.a-right { flex: 1; padding-left: 7px; padding-right: 8px; }

.big-row { display: flex; }
.g-styles .big-row { padding-left: 4px; }
.big {
  display: flex;
  flex-direction: column;
  align-items: center;
  flex: none;
}
.big-ic { height: 38px; padding-top: 5px; box-sizing: border-box; }
.big .tri.two { margin-top: 5px; }
.w74 { width: 74px; }
.w50 { width: 50px; }
.w52 { width: 52px; }
.w43 { width: 43px; }

.e-body { padding-left: 8px; }
.e-stack { width: 86px; margin-left: 0; }
.after { margin-left: 4px; }
.auto-car { margin-right: 8px; }
.collapse { position: absolute; right: 7px; bottom: 4px; }

/* formula bar */
.fbar {
  height: 47px;
  box-sizing: border-box;
  background: #e6e6e6;
  padding-top: 11px;
  display: flex;
  align-items: flex-start;
}
.namebox, .fbtns, .finput {
  box-sizing: border-box;
  height: 25px;
  background: #fff;
  border: 1px solid #c6c6c6;
  display: flex;
  align-items: center;
}
.namebox {
  width: 102px;
  margin-left: 5px;
  padding: 0 6px;
  justify-content: space-between;
  font-size: 12px;
}
.big-tri { border-width: 4px 4px 0; }
.fdots { width: 30px; text-align: center; font-size: 14px; line-height: 25px; color: #999; }
.fbtns { width: 109px; justify-content: space-around; padding: 0 5px; }
.fx { font-family: "Liberation Serif", serif; font-style: italic; font-size: 14px; font-weight: 700; color: #555; }
.fx small { font-size: 10px; }
.finput { width: 1111px; margin-left: 4px; justify-content: flex-end; padding-right: 4px; }

/* sheet */
.sheet { height: 474px; display: flex; overflow: hidden; }
.grid { display: grid; width: 1345px; height: 474px; overflow: hidden; flex: none; background: #fff; }
.corner, .colhead, .rowhead {
  box-sizing: border-box;
  background: #e6e6e6;
  color: #444;
  overflow: hidden;
  display: flex;
  align-items: center;
  justify-content: center;
  font-size: 12px;
  line-height: 14px;
}
.corner { align-items: flex-end; justify-content: flex-end; padding: 0 3px 3px 0; border-right: 1px solid #aaa; border-bottom: 1px solid #aaa; }
.colhead { border-right: 1px solid #c0c0c0; border-bottom: 1px solid #a0a0a0; }
.colhead.active { background: #d2d2d2; color: #217346; border-bottom: 2px solid #217346; }
.rowhead { border-right: 1px solid #a0a0a0; border-bottom: 1px solid #c0c0c0; }
.cell {
  box-sizing: border-box;
  min-width: 0;
  background: #fff;
  border-right: 1px solid #d4d4d4;
  border-bottom: 1px solid #d4d4d4;
  font-family: "Liberation Sans", sans-serif;
  font-size: 12px;
  line-height: 14px;
  color: #000;
  white-space: pre;
}
/* Arial Narrow look: the regular face squeezed sideways */
.tx { display: inline-block; transform: scaleX(0.785); transform-origin: 0 50%; }
.txt { padding-left: 2px; }
.f-b { font-weight: 700; }
.f-b .tx { transform: scaleX(0.8); }
.f-u .tx { text-decoration: underline; transform: scaleX(0.815); }
.f-l { padding-top: 2px; }
.f-n { padding-left: 5px; }
.f-t {
  margin: -1px 0 0 -1px;
  border: 2px solid #000;
  padding: 0;
  font-size: 20px;
  line-height: 19px;
  font-weight: 700;
  text-align: center;
}
.f-t .tx { transform: scaleX(0.765); transform-origin: 50% 50%; }
.vblack { border-right-color: #000; }
.hblack { border-bottom-color: #000; }
.thick { border-right: 2px solid #000; }
.plain { border-color: transparent; }
.box { border-right-color: #000; border-bottom-color: #000; box-shadow: -1px -1px 0 #000; }

.vscroll {
  width: 21px;
  background: #e6e6e6;
  padding: 3px 4px 0;
  box-sizing: border-box;
  display: flex;
  flex-direction: column;
}
.sb-btn {
  height: 14px;
  flex: none;
  background: #fff;
  border: 1px solid #c6c6c6;
  box-sizing: border-box;
  display: flex;
  align-items: center;
  justify-content: center;
}
.sb-btn .tri { border-width: 4px 4px 0; }
.sb-btn .up-tri { border-width: 0 4px 4px; border-bottom: 4px solid #666; border-top: 0; }
.sb-thumb { height: 100px; margin-top: 1px; flex: none; background: #fff; border: 1px solid #c6c6c6; box-sizing: border-box; }
.sb-fill { flex: 1; }

/* sheet tabs */
.sheetbar {
  height: 28px;
  box-sizing: border-box;
  background: #e6e6e6;
  border-top: 1px solid #bfbfbf;
  border-bottom: 1px solid #c6c6c6;
  display: flex;
  align-items: flex-start;
}
.nav { width: 100px; height: 24px; box-sizing: border-box; display: flex; align-items: center; padding-left: 27px; gap: 23px; border-right: 1px solid #aaa; }
.stab {
  height: 20px;
  margin-top: 3px;
  box-sizing: border-box;
  border-right: 1px solid #aaa;
  text-align: center;
  line-height: 20px;
  font-size: 12px;
  letter-spacing: 0.15px;
  color: #555;
  flex: none;
}
.w59 { width: 59px; }
.w105 { width: 105px; }
.w90 { width: 90px; }
.stab.on {
  width: 157px;
  height: 25px;
  margin-top: -1px;
  background: #fff;
  border-right: 0;
  border-bottom: 3px solid #217346;
  color: #217346;
  font-weight: 700;
  line-height: 25px;
}
.plus { width: 16px; margin: 3px 0 0 33px; height: 19px; display: flex; align-items: center; flex: none; }
.hscroll { margin: 6px 0 0 21px; width: 705px; height: 14px; display: flex; flex: none; background: #d8d8d8; }
.hbtn { width: 14px; flex: none; background: #fff; border: 1px solid #c6c6c6; box-sizing: border-box; display: flex; align-items: center; justify-content: center; }
.hthumb { width: 656px; flex: none; background: #fff; border: 1px solid #c6c6c6; box-sizing: border-box; }
.hfill { flex: 1; }

/* status */
.status {
  height: 22px;
  background: #f1f1f1;
  display: flex;
  align-items: center;
  position: relative;
  font-size: 12px;
}
.ready { margin-left: 7px; }
.views { margin-left: auto; display: flex; height: 22px; }
.view { width: 38.500px; display: flex; align-items: center; justify-content: center; }
.sel2 { background: #c6c6c6; }
.zoom-s { display: flex; align-items: center; margin-left: 5px; }
.zm { width: 6px; height: 2px; background: #666; }
.zp { width: 8px; height: 2px; background: #666; position: relative; }
.zp::after { content: ""; position: absolute; left: 3px; top: -3px; width: 2px; height: 8px; background: #666; }
.slider { width: 100px; height: 1px; background: #aaa; margin: 0 4px 0 3px; position: relative; }
.knob { position: absolute; left: 48px; top: -5px; width: 4px; height: 11px; background: #666; }
.pct100 { width: 42px; text-align: right; padding-right: 9px; color: #666; }

/* taskbar */
.taskbar {
  height: 40px;
  background: #101010;
  color: #fff;
  display: flex;
  align-items: center;
  flex: none;
}
.sys { width: 145px; display: flex; align-items: center; flex: none; }
.tb-win { margin-left: 16px; }
.tb-search { margin-left: 31px; }
.tb-view { margin-left: 30px; }
.slots { display: flex; height: 40px; }
.slot {
  width: 49px;
  height: 40px;
  box-sizing: border-box;
  padding-bottom: 2px;
  display: flex;
  align-items: center;
  justify-content: center;
  position: relative;
  flex: none;
}
.slot.run::after { content: ""; position: absolute; left: 5px; right: 5px; bottom: 0; height: 2px; background: #76b9ed; }
.slot.act { background: #3d3d3d; }
.slot.act::after { left: 0; right: 0; }
.fb {
  width: 24px;
  height: 26px;
  background: #3b5998;
  color: #fff;
  font-family: "Liberation Sans", sans-serif;
  font-weight: 700;
  font-size: 21px;
  line-height: 29px;
  text-align: center;
}
.word, .xl { width: 22px; height: 23px; display: flex; align-items: stretch; position: relative; font-family: "Liberation Sans", sans-serif; font-size: 11px; }
.word b, .xl b { width: 13px; background: #2b579a; color: #fff; display: flex; align-items: center; justify-content: center; }
.xl b { background: #1e7145; font-size: 12px; }
.lines { flex: 1; margin: 3px 0; background: repeating-linear-gradient(#fff 0 2px, #8aa6cf 2px 3px); }
.lines.g { background: repeating-linear-gradient(#2f7d55 0 1px, #e5f0ea 1px 3px); }
.tray { margin-left: auto; display: flex; align-items: center; height: 40px; position: relative; }
.tr-vol { margin-left: 15px; }
.tr-net { margin-left: 17px; }
.tr-app { margin-left: 16px; }
.tr-note { margin-left: 16px; }
.eng { margin-left: 14px; font-size: 12px; width: 28px; }
.clock {
  margin-left: 10px;
  width: 64px;
  display: flex;
  flex-direction: column;
  align-items: center;
  font-size: 12px;
  line-height: 16px;
}
.desk { width: 1px; height: 40px; background: #555; margin-left: 8px; margin-right: 3px; }
</style>
